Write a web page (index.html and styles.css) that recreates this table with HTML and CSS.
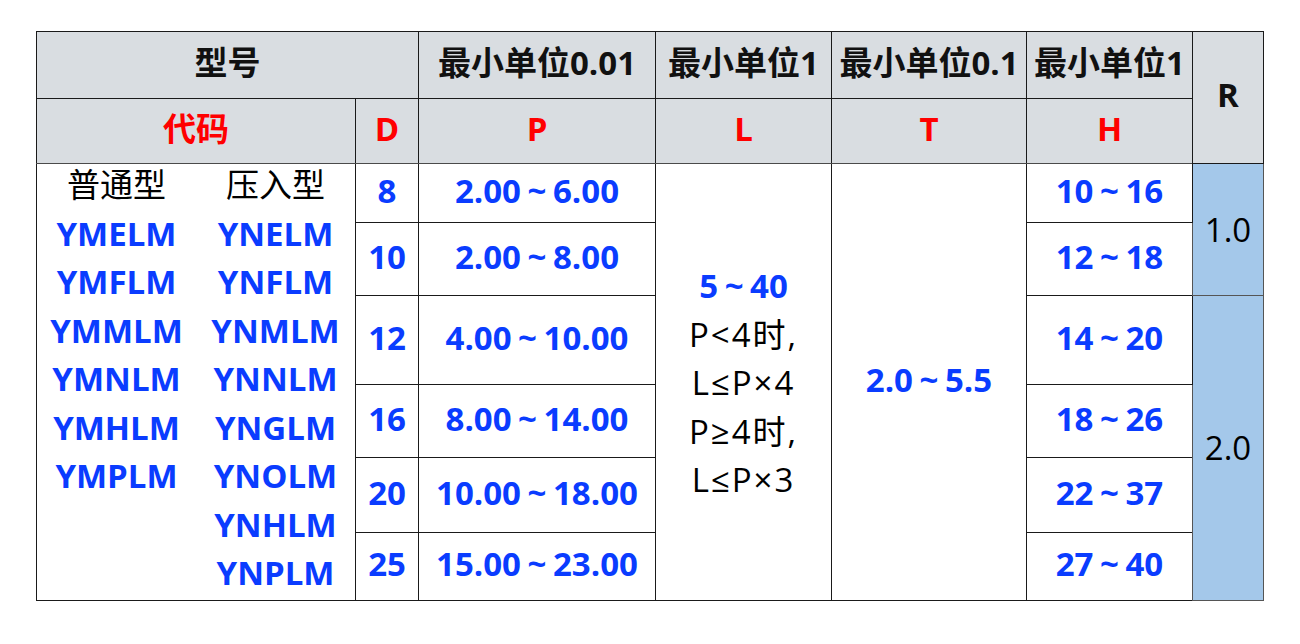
FILE: index.html
```html
<!DOCTYPE html>
<html lang="zh">
<head>
<meta charset="utf-8">
<link rel="stylesheet" href="styles.css">
</head>
<body>
<table class="spec">
  <colgroup>
    <col class="c-code"><col class="c-d"><col class="c-p"><col class="c-l"><col class="c-t"><col class="c-h"><col class="c-r">
  </colgroup>
  <tr class="h1">
    <th colspan="2" class="hd">型号</th>
    <th class="hd">最小单位0.01</th>
    <th class="hd">最小单位1</th>
    <th class="hd">最小单位0.1</th>
    <th class="hd">最小单位1</th>
    <th rowspan="2" class="hd">R</th>
  </tr>
  <tr class="h2">
    <th class="red">代码</th>
    <th class="red">D</th>
    <th class="red">P</th>
    <th class="red">L</th>
    <th class="red">T</th>
    <th class="red">H</th>
  </tr>
  <tr class="r1">
    <td rowspan="6" class="codes">
      <div class="code-cols">
        <div class="code-col">
          <div class="lbl">普通型</div>
          <div>YMELM</div>
          <div>YMFLM</div>
          <div>YMMLM</div>
          <div>YMNLM</div>
          <div>YMHLM</div>
          <div>YMPLM</div>
        </div>
        <div class="code-col">
          <div class="lbl">压入型</div>
          <div>YNELM</div>
          <div>YNFLM</div>
          <div>YNMLM</div>
          <div>YNNLM</div>
          <div>YNGLM</div>
          <div>YNOLM</div>
          <div>YNHLM</div>
          <div>YNPLM</div>
        </div>
      </div>
    </td>
    <td class="val">8</td>
    <td class="val">2.00 ~ 6.00</td>
    <td rowspan="6" class="lcell">
      <div class="val">5 ~ 40</div>
      <div class="note">P&lt;4时,</div>
      <div class="note">L≤P×4</div>
      <div class="note">P≥4时,</div>
      <div class="note">L≤P×3</div>
    </td>
    <td rowspan="6" class="val">2.0 ~ 5.5</td>
    <td class="val">10 ~ 16</td>
    <td rowspan="2" class="rcell">1.0</td>
  </tr>
  <tr class="r2">
    <td class="val">10</td>
    <td class="val">2.00 ~ 8.00</td>
    <td class="val">12 ~ 18</td>
  </tr>
  <tr class="r3">
    <td class="val">12</td>
    <td class="val">4.00 ~ 10.00</td>
    <td class="val">14 ~ 20</td>
    <td rowspan="4" class="rcell">2.0</td>
  </tr>
  <tr class="r4">
    <td class="val">16</td>
    <td class="val">8.00 ~ 14.00</td>
    <td class="val">18 ~ 26</td>
  </tr>
  <tr class="r5">
    <td class="val">20</td>
    <td class="val">10.00 ~ 18.00</td>
    <td class="val">22 ~ 37</td>
  </tr>
  <tr class="r6">
    <td class="val">25</td>
    <td class="val">15.00 ~ 23.00</td>
    <td class="val">27 ~ 40</td>
  </tr>
</table>
</body>
</html>
```
FILE: styles.css
```css
html, body {
  margin: 0;
  padding: 0;
  background: #ffffff;
}
body {
  padding: 31px 0 0 36px;
  font-family: "Open Sans", "Noto Sans CJK SC", sans-serif;
  font-size: 33px;
  color: #000;
}
.spec {
  border-collapse: collapse;
  table-layout: fixed;
  width: 1227px;
}
.c-code { width: 319px; }
.c-d { width: 63px; }
.c-p { width: 237px; }
.c-l { width: 176px; }
.c-t { width: 195px; }
.c-h { width: 166px; }
.c-r { width: 71px; }

.spec th, .spec td {
  border: 1px solid #1a1a1a;
  padding: 0 0 5px 0;
  text-align: center;
  vertical-align: middle;
  line-height: 48px;
  white-space: nowrap;
}
.spec th {
  background: #d9dde1;
  font-weight: 700;
}
.hd { color: #111; }
.red { color: #ff0000; }

.h1 { height: 67px; }
.h2 { height: 65px; }
.h2 th { border-bottom-color: #4a4a4a; }
.r1 { height: 59px; }
.r2 { height: 73px; }
.r3 { height: 89px; }
.r4 { height: 73px; }
.r5 { height: 75px; }
.r6 { height: 68px; }

.val {
  color: #0a3cff;
  font-weight: 700;
  word-spacing: -2px;
}
.codes {
  vertical-align: top !important;
  color: #0a3cff;
  font-weight: 700;
  line-height: 48.5px !important;
  padding: 0 !important;
}
.code-cols {
  display: flex;
  margin-top: -3px;
}
.code-col {
  flex: 1 1 0;
  display: flex;
  flex-direction: column;
  align-items: center;
}
.lbl {
  color: #000;
  font-weight: 400;
}
.spec .lcell {
  line-height: 48.5px;
  color: #000;
  padding: 3px 0 0 0;
}
.note {
  letter-spacing: 2px;
}
.spec .rcell {
  background: #a4c8ea;
  color: #000;
  font-weight: 400;
  border-color: #555;
  padding: 0;
}
```
